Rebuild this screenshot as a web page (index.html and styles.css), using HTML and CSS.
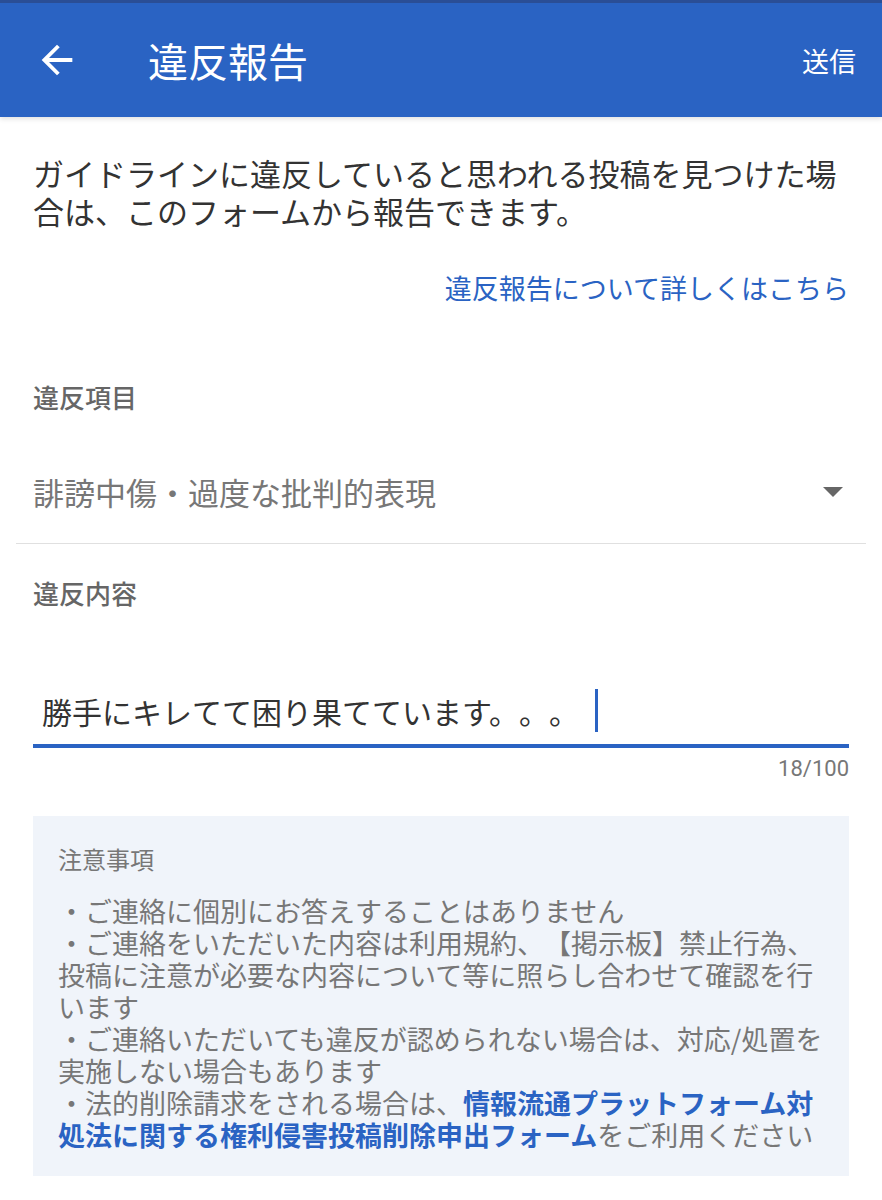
FILE: index.html
```html
<!DOCTYPE html>
<html lang="ja">
<head>
<meta charset="utf-8">
<title>違反報告</title>
<link rel="stylesheet" href="styles.css">
</head>
<body>
<header class="appbar">
  <button class="back" aria-label="戻る">
    <svg viewBox="0 0 24 24" width="46" height="46"><path d="M20 11H7.83l5.59-5.59L12 4l-8 8 8 8 1.41-1.41L7.83 13H20v-2z" fill="#fff"/></svg>
  </button>
  <h1 class="title">違反報告</h1>
  <span class="send">送信</span>
</header>
<main class="content">
  <p class="intro">ガイドラインに違反していると思われる投稿を見つけた場合は、このフォームから報告できます。</p>
  <div class="more"><a class="more-link">違反報告について詳しくはこちら</a></div>

  <div class="label label-first">違反項目</div>
  <div class="select">
    <span class="select-value">誹謗中傷・過度な批判的表現</span>
    <span class="caret"></span>
  </div>

  <div class="label label-second">違反内容</div>
  <div class="input">
    <span class="input-text">勝手にキレてて困り果てています。。。</span><span class="cursor"></span>
  </div>
  <div class="counter">18/100</div>

  <section class="notice">
    <h2 class="notice-title">注意事項</h2>
    <p class="notice-body">・ご連絡に個別にお答えすることはありません<br>・ご連絡をいただいた内容は利用規約、【掲示板】禁止行為、投稿に注意が必要な内容について等に照らし合わせて確認を行います<br>・ご連絡いただいても違反が認められない場合は、対応/処置を実施しない場合もあります<br>・法的削除請求をされる場合は、<a class="notice-link">情報流通プラットフォーム対処法に関する権利侵害投稿削除申出フォーム</a>をご利用ください</p>
  </section>
</main>
</body>
</html>
```
FILE: styles.css
```css
* { box-sizing: border-box; }
html, body { margin: 0; padding: 0; background: #fff; }
body {
  font-family: "Noto Sans CJK JP", "Noto Sans", sans-serif;
  color: #333;
  width: 882px;
  text-spacing-trim: space-all;
}
.appbar {
  height: 117px;
  background: #2a63c3;
  border-top: 3px solid #2a4e96;
  display: flex;
  align-items: center;
  box-shadow: 0 2px 5px rgba(0,0,0,0.12);
  position: relative;
}
.back {
  background: none;
  border: 0;
  padding: 0;
  margin-left: 34px;
  width: 46px;
  height: 46px;
  display: flex;
}
.title {
  margin: 0 0 0 68px;
  font-size: 40px;
  font-weight: 400;
  color: #fff;
  line-height: 1;
  flex: 1;
}
.send {
  color: #fff;
  font-size: 27px;
  margin-right: 26px;
  line-height: 1;
}
.content {
  padding: 0 33px;
}
.intro {
  margin: 37px 0 0;
  font-size: 31px;
  line-height: 38px;
  color: #333;
}
.more {
  margin-top: 40px;
  text-align: right;
}
.more-link {
  font-size: 27px;
  line-height: 36px;
  color: #2a63c3;
}
.label {
  font-size: 26px;
  line-height: 34px;
  color: #666;
  font-weight: 500;
}
.label-first { margin-top: 74px; }
.label-second { margin-top: 32px; }
.select {
  margin: 58px -17px 0;
  padding: 0 23px 31px 17px;
  border-bottom: 1px solid #e0e0e0;
  display: flex;
  align-items: center;
  justify-content: space-between;
}
.select-value {
  font-size: 31px;
  line-height: 40px;
  color: #777;
}
.caret {
  width: 0;
  height: 0;
  border-left: 10px solid transparent;
  border-right: 10px solid transparent;
  border-top: 10px solid #666;
}
.input {
  margin-top: 79px;
  padding: 0 0 12px 9px;
  border-bottom: 4px solid #2a63c3;
  display: flex;
  align-items: center;
}
.input-text {
  font-size: 30px;
  line-height: 40px;
  color: #333;
}
.cursor {
  width: 3px;
  height: 43px;
  background: #2a63c3;
  margin-left: 16px;
}
.counter {
  margin-top: 9px;
  text-align: right;
  font-size: 22px;
  line-height: 24px;
  color: #777;
  font-family: "Roboto", "Noto Sans CJK JP", sans-serif;
}
.notice {
  margin-top: 35px;
  background: #f0f4fa;
  padding: 28px 22px 25px 25px;
}
.notice-title {
  margin: 0;
  font-size: 24px;
  line-height: 30px;
  font-weight: 400;
  color: #777;
}
.notice-body {
  margin: 21px 0 0;
  font-size: 27px;
  line-height: 32px;
  color: #777;
}
.notice-link {
  color: #2a63c3;
  font-weight: 700;
}
```
